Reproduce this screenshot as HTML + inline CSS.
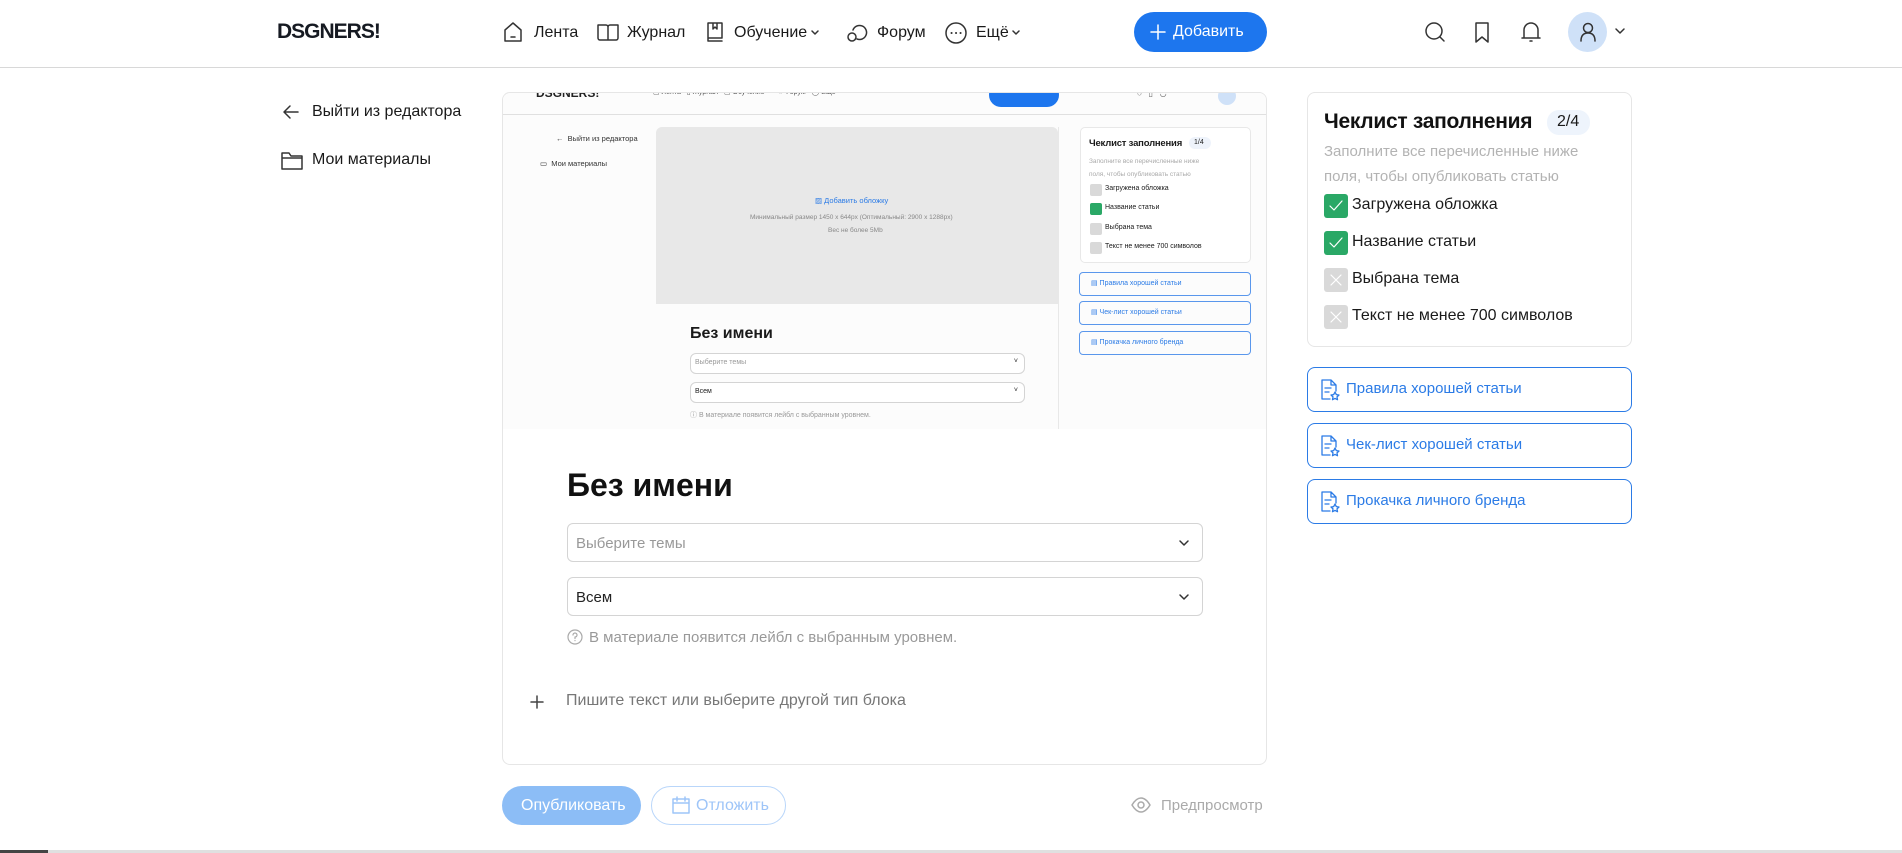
<!DOCTYPE html>
<html><head><meta charset="utf-8"><style>
*{box-sizing:border-box;margin:0;padding:0}
body{width:1902px;height:853px;background:#fff;font-family:"Liberation Sans",Arial,sans-serif;color:#1a1a1a;position:relative;overflow:hidden}
.a{position:absolute}
.t{position:absolute;white-space:nowrap}
svg{position:absolute;fill:none;stroke:#333;stroke-width:1.5;stroke-linecap:round;stroke-linejoin:round}
.nav{font-size:16px;top:24px}
.blue{color:#2b7be6}
.ck{position:absolute;width:24px;height:24px;border-radius:3px}
.ok{background:#2aa866}.no{background:#d9d9d9}
.lb{position:absolute;left:1307px;width:325px;height:45px;border:1.5px solid #2b7be6;border-radius:8px}
.sel{position:absolute;border:1px solid #d4d4d4;border-radius:6px;background:#fff}
</style></head><body>
<!-- header -->
<div class="t" style="left:277px;top:20px;font-size:21px;font-weight:900;letter-spacing:-1px;color:#161a22">DSGNERS!</div>
<svg style="left:503px;top:21px" width="20" height="22" viewBox="0 0 20 22"><path d="M2 9 L10 2 L18 9 V20 H2 Z"/><path d="M8 16h4"/></svg>
<div class="t nav" style="left:534px">Лента</div>
<svg style="left:597px;top:23px" width="22" height="18" viewBox="0 0 22 18"><path d="M1 2h8a2 2 0 0 1 2 2v13H3a2 2 0 0 1-2-2z M21 2h-8a2 2 0 0 0-2 2v13h8a2 2 0 0 0 2-2z"/></svg>
<div class="t nav" style="left:627px">Журнал</div>
<svg style="left:706px;top:21px" width="18" height="22" viewBox="0 0 18 22"><path d="M2 2h14v15H2z M2 17v3h14 M7 2v6l2-2 2 2V2"/></svg>
<div class="t nav" style="left:734px">Обучение</div>
<svg style="left:810px;top:29px" width="10" height="8" viewBox="0 0 10 8"><path d="M2 2l3 3 3-3"/></svg>
<svg style="left:845px;top:20px" width="24" height="24" viewBox="0 0 24 24"><path d="M8 10a7 7 0 1 1 4 9"/><circle cx="7" cy="17" r="4"/></svg>
<div class="t nav" style="left:877px">Форум</div>
<svg style="left:944px;top:21px" width="24" height="24" viewBox="0 0 24 24"><circle cx="12" cy="12" r="10"/><path d="M7.5 12h.1M12 12h.1M16.5 12h.1" stroke-width="2"/></svg>
<div class="t nav" style="left:976px">Ещё</div>
<svg style="left:1011px;top:29px" width="10" height="8" viewBox="0 0 10 8"><path d="M2 2l3 3 3-3"/></svg>
<div class="a" style="left:1134px;top:12px;width:133px;height:40px;border-radius:20px;background:#1d76ee"></div>
<svg style="left:1150px;top:24px;stroke:#fff" width="16" height="16" viewBox="0 0 16 16"><path d="M8 1v14M1 8h14"/></svg>
<div class="t" style="left:1173px;top:23px;font-size:16px;color:#fff">Добавить</div>
<svg style="left:1423px;top:21px" width="24" height="24" viewBox="0 0 24 24"><circle cx="11" cy="10" r="8"/><path d="M17 16l4 4"/></svg>
<svg style="left:1473px;top:21px" width="18" height="22" viewBox="0 0 18 22"><path d="M3 2h12v19l-6-5-6 5z"/></svg>
<svg style="left:1519px;top:19px" width="24" height="26" viewBox="0 0 24 26"><path d="M5 19V11a7 7 0 0 1 14 0v8H5z M3 19h18 M11 22h2"/></svg>
<div class="a" style="left:1568px;top:12px;width:39px;height:40px;border-radius:50%;background:#cfe1f8"></div>
<svg style="left:1577px;top:21px" width="22" height="22" viewBox="0 0 22 22"><circle cx="11" cy="7" r="4.5"/><path d="M4 20c0-6 3-8 7-8s7 2 7 8"/></svg>
<svg style="left:1614px;top:27px" width="12" height="8" viewBox="0 0 12 8"><path d="M2 2l4 4 4-4"/></svg>
<div class="a" style="left:0;top:67px;width:1902px;height:1px;background:#d8d8d8"></div>
<!-- left -->
<svg style="left:282px;top:103px" width="18" height="18" viewBox="0 0 18 18"><path d="M16 9H2M8 3L2 9l6 6"/></svg>
<div class="t" style="left:312px;top:103px;font-size:16px">Выйти из редактора</div>
<svg style="left:280px;top:151px" width="24" height="20" viewBox="0 0 24 20"><path d="M2 2h7l2 3h11v13H2z M2 7h20"/></svg>
<div class="t" style="left:312px;top:151px;font-size:16px">Мои материалы</div>
<!-- main card -->
<div class="a" style="left:502px;top:92px;width:765px;height:673px;border:1px solid #e6e6e6;border-radius:8px;background:#fff;overflow:hidden">
 <div class="a" style="left:0;top:0;width:765px;height:336px;background:#fcfcfc"></div>
 <div class="a" style="left:0;top:21px;width:765px;height:1px;background:#e0e0e0"></div>
 <div class="t" style="left:33px;top:-7px;font-size:12px;font-weight:900;color:#222">DSGNERS!</div>
 <div class="t" style="left:150px;top:-5px;font-size:7px;color:#555">▢ Лента &nbsp; ▯ Журнал &nbsp; ▢ Обучение ˅ &nbsp;&nbsp; ◌ Форум &nbsp; ◯ Ещё ˅</div>
 <div class="a" style="left:486px;top:-10px;width:70px;height:24px;border-radius:12px;background:#1d76ee"></div>
 <div class="t" style="left:634px;top:-4px;font-size:8px;color:#666">○ &nbsp; ▯ &nbsp; ◡</div>
 <div class="a" style="left:715px;top:-6px;width:18px;height:18px;border-radius:50%;background:#cfe1f8"></div>
 <div class="t" style="left:53px;top:41px;font-size:7.5px;color:#333">←&nbsp; Выйти из редактора</div>
 <div class="t" style="left:37px;top:66px;font-size:7.5px;color:#333">▭&nbsp; Мои материалы</div>
 <div class="a" style="left:153px;top:34px;width:402px;height:177px;background:#e8e8e8;border-radius:6px 6px 0 0"></div>
 <div class="a" style="left:555px;top:34px;width:1px;height:302px;background:#e8e8e8"></div>
 <div class="t blue" style="left:312px;top:103px;font-size:7.5px">▨ Добавить обложку</div>
 <div class="t" style="left:247px;top:121px;font-size:6.5px;color:#888">Минимальный размер 1450 x 644px (Оптимальный: 2900 x 1288px)</div>
 <div class="t" style="left:325px;top:134px;font-size:6.5px;color:#888">Вес не более 5Mb</div>
 <div class="t" style="left:187px;top:232px;font-size:16px;font-weight:bold">Без имени</div>
 <div class="sel" style="left:187px;top:260px;width:335px;height:21px"><span class="t" style="left:4px;top:5px;font-size:7px;color:#999">Выберите темы</span><span class="t" style="right:6px;top:4px;font-size:7px">˅</span></div>
 <div class="sel" style="left:187px;top:289px;width:335px;height:21px"><span class="t" style="left:4px;top:5px;font-size:7px">Всем</span><span class="t" style="right:6px;top:4px;font-size:7px">˅</span></div>
 <div class="t" style="left:187px;top:317px;font-size:7px;color:#999">ⓘ В материале появится лейбл с выбранным уровнем.</div>
 <div class="a" style="left:577px;top:34px;width:171px;height:136px;border:1px solid #e8e8e8;border-radius:5px;background:#fff"></div>
 <div class="t" style="left:586px;top:45px;font-size:9.5px;font-weight:bold;letter-spacing:-0.2px">Чеклист заполнения</div>
 <div class="a" style="left:686px;top:44px;width:22px;height:12px;border-radius:6px;background:#eef3fb"></div>
 <div class="t" style="left:691px;top:46px;font-size:7px">1/4</div>
 <div class="t" style="left:586px;top:62px;font-size:6.5px;color:#aaa;line-height:13px">Заполните все перечисленные ниже<br>поля, чтобы опубликовать статью</div>
 <div class="a no" style="left:587px;top:91px;width:12px;height:12px;border-radius:2px"></div><div class="t" style="left:602px;top:92px;font-size:7px">Загружена обложка</div>
 <div class="a ok" style="left:587px;top:110px;width:12px;height:12px;border-radius:2px"></div><div class="t" style="left:602px;top:111px;font-size:7px">Название статьи</div>
 <div class="a no" style="left:587px;top:130px;width:12px;height:12px;border-radius:2px"></div><div class="t" style="left:602px;top:131px;font-size:7px">Выбрана тема</div>
 <div class="a no" style="left:587px;top:149px;width:12px;height:12px;border-radius:2px"></div><div class="t" style="left:602px;top:150px;font-size:7px">Текст не менее 700 символов</div>
 <div class="a" style="left:576px;top:179px;width:172px;height:24px;border:1px solid #5a97ec;border-radius:4px"></div><div class="t blue" style="left:588px;top:186px;font-size:7px">▤ Правила хорошей статьи</div>
 <div class="a" style="left:576px;top:208px;width:172px;height:24px;border:1px solid #5a97ec;border-radius:4px"></div><div class="t blue" style="left:588px;top:215px;font-size:7px">▤ Чек-лист хорошей статьи</div>
 <div class="a" style="left:576px;top:238px;width:172px;height:24px;border:1px solid #5a97ec;border-radius:4px"></div><div class="t blue" style="left:588px;top:245px;font-size:7px">▤ Прокачка личного бренда</div>
 <div class="t" style="left:64px;top:374px;font-size:32px;font-weight:bold;color:#111">Без имени</div>
 <div class="sel" style="left:64px;top:430px;width:636px;height:39px"><span class="t" style="left:8px;top:11px;font-size:15px;color:#999">Выберите темы</span></div>
 <div class="sel" style="left:64px;top:484px;width:636px;height:39px"><span class="t" style="left:8px;top:11px;font-size:15px;color:#222">Всем</span></div>
 <svg style="left:675px;top:446px" width="12" height="8" viewBox="0 0 12 8"><path d="M2 2l4 4 4-4"/></svg>
 <svg style="left:675px;top:500px" width="12" height="8" viewBox="0 0 12 8"><path d="M2 2l4 4 4-4"/></svg>
 <svg style="left:64px;top:536px;stroke:#aaa;stroke-width:1.2" width="16" height="16" viewBox="0 0 16 16"><circle cx="8" cy="8" r="7"/><path d="M6 6a2 2 0 1 1 2 2v1.5M8 11.5v.1"/></svg>
 <div class="t" style="left:86px;top:536px;font-size:15px;color:#999">В материале появится лейбл с выбранным уровнем.</div>
 <svg style="left:26px;top:601px;stroke:#444" width="16" height="16" viewBox="0 0 16 16"><path d="M8 2v12M2 8h12"/></svg>
 <div class="t" style="left:63px;top:599px;font-size:16px;color:#777">Пишите текст или выберите другой тип блока</div>
</div>
<!-- bottom buttons -->
<div class="a" style="left:502px;top:786px;width:139px;height:39px;border-radius:20px;background:#8cbdf6"></div>
<div class="t" style="left:521px;top:797px;font-size:16px;color:#fff">Опубликовать</div>
<div class="a" style="left:651px;top:786px;width:135px;height:39px;border-radius:20px;border:1.5px solid #b9d6fa"></div>
<svg style="left:671px;top:795px;stroke:#9ec5f8" width="20" height="20" viewBox="0 0 20 20"><path d="M2 4h16v14H2z M2 8h16 M6 2v4M14 2v4"/></svg>
<div class="t" style="left:696px;top:797px;font-size:16px;color:#9ec5f8">Отложить</div>
<svg style="left:1131px;top:796px;stroke:#aaa" width="20" height="18" viewBox="0 0 20 18"><path d="M1 9c3-5 6-7 9-7s6 2 9 7c-3 5-6 7-9 7s-6-2-9-7z"/><circle cx="10" cy="9" r="3"/></svg>
<div class="t" style="left:1161px;top:797px;font-size:15px;color:#aaa">Предпросмотр</div>
<!-- checklist -->
<div class="a" style="left:1307px;top:92px;width:325px;height:255px;border:1px solid #e6e6e6;border-radius:8px"></div>
<div class="t" style="left:1324px;top:110px;font-size:21px;font-weight:bold;color:#111;letter-spacing:-0.3px">Чеклист заполнения</div>
<div class="a" style="left:1547px;top:110px;width:43px;height:25px;border-radius:12px;background:#eef4fc"></div>
<div class="t" style="left:1557px;top:113px;font-size:16px">2/4</div>
<div class="t" style="left:1324px;top:139px;font-size:15px;color:#b3b3b3;line-height:25px">Заполните все перечисленные ниже<br>поля, чтобы опубликовать статью</div>
<div class="ck ok" style="left:1324px;top:194px"></div><svg style="left:1328px;top:199px;stroke:#fff;stroke-width:1.2" width="16" height="14" viewBox="0 0 16 14"><path d="M2 7l4 4 8-9"/></svg>
<div class="t" style="left:1352px;top:196px;font-size:16px">Загружена обложка</div>
<div class="ck ok" style="left:1324px;top:231px"></div><svg style="left:1328px;top:236px;stroke:#fff;stroke-width:1.2" width="16" height="14" viewBox="0 0 16 14"><path d="M2 7l4 4 8-9"/></svg>
<div class="t" style="left:1352px;top:233px;font-size:16px">Название статьи</div>
<div class="ck no" style="left:1324px;top:268px"></div><svg style="left:1330px;top:274px;stroke:#fff;stroke-width:1.2" width="12" height="12" viewBox="0 0 12 12"><path d="M1 1l10 10M11 1L1 11"/></svg>
<div class="t" style="left:1352px;top:270px;font-size:16px">Выбрана тема</div>
<div class="ck no" style="left:1324px;top:305px"></div><svg style="left:1330px;top:311px;stroke:#fff;stroke-width:1.2" width="12" height="12" viewBox="0 0 12 12"><path d="M1 1l10 10M11 1L1 11"/></svg>
<div class="t" style="left:1352px;top:307px;font-size:16px">Текст не менее 700 символов</div>
<div class="lb" style="top:367px"></div>
<div class="lb" style="top:423px"></div>
<div class="lb" style="top:479px"></div>
<svg style="left:1320px;top:378px;stroke:#2b7be6;stroke-width:1.3" width="22" height="24" viewBox="0 0 22 24"><path d="M10 21H2V2h9l5 5v6 M11 2v5h5 M5 10h6M5 14h4"/><path d="M15 14l1.3 2.6 2.7.4-2 1.9.5 2.8-2.5-1.3-2.5 1.3.5-2.8-2-1.9 2.7-.4z"/></svg>
<svg style="left:1320px;top:434px;stroke:#2b7be6;stroke-width:1.3" width="22" height="24" viewBox="0 0 22 24"><path d="M10 21H2V2h9l5 5v6 M11 2v5h5 M5 10h6M5 14h4"/><path d="M15 14l1.3 2.6 2.7.4-2 1.9.5 2.8-2.5-1.3-2.5 1.3.5-2.8-2-1.9 2.7-.4z"/></svg>
<svg style="left:1320px;top:490px;stroke:#2b7be6;stroke-width:1.3" width="22" height="24" viewBox="0 0 22 24"><path d="M10 21H2V2h9l5 5v6 M11 2v5h5 M5 10h6M5 14h4"/><path d="M15 14l1.3 2.6 2.7.4-2 1.9.5 2.8-2.5-1.3-2.5 1.3.5-2.8-2-1.9 2.7-.4z"/></svg>
<div class="t blue" style="left:1346px;top:380px;font-size:15px">Правила хорошей статьи</div>
<div class="t blue" style="left:1346px;top:436px;font-size:15px">Чек-лист хорошей статьи</div>
<div class="t blue" style="left:1346px;top:492px;font-size:15px">Прокачка личного бренда</div>
<div class="a" style="left:0;top:850px;width:1902px;height:3px;background:#e0e0e0"></div>
<div class="a" style="left:0;top:850px;width:48px;height:3px;background:#444"></div>
</body></html>
